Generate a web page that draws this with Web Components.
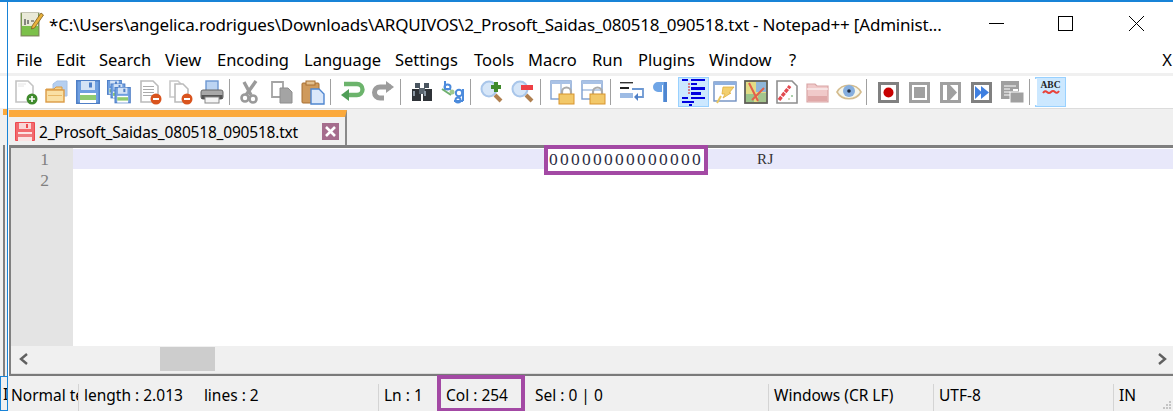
<!DOCTYPE html>
<html>
<head>
<meta charset="utf-8">
<title>Notepad++</title>
<style>
html, body { margin: 0; padding: 0; background: #fff; }
body { font-family: "Noto Sans", "Open Sans", sans-serif; }
</style>
</head>
<body>
<np-app>
	<np-ghost slot="ghost"></np-ghost>
	<np-titlebar>*C:\Users\angelica.rodrigues\Downloads\ARQUIVOS\2_Prosoft_Saidas_080518_090518.txt - Notepad++ [Administ...</np-titlebar>
	<np-menubar></np-menubar>
	<np-toolbar></np-toolbar>
	<np-tabbar>2_Prosoft_Saidas_080518_090518.txt</np-tabbar>
	<np-editor></np-editor>
	<np-scrollbar></np-scrollbar>
	<np-statusbar></np-statusbar>
</np-app>

<script>
const FONT = '"Noto Sans", "Open Sans", sans-serif';

// small builders so the icon table below stays readable
const frame = (color, inner) => `<rect x="3.5" y="3.5" width="18" height="18" fill="#fff" stroke="${color}" stroke-width="3"/>${inner}`;
const page = (x, y, w, h, stroke = '#c4c4c4') => `<path d="M${x} ${y}h${w - 5}l5 5v${h - 5}h-${w}z" fill="#fff" stroke="${stroke}" stroke-width="1.6"/>`;
const lines = (x, y, w, n) => Array.from({ length: n }, (_, i) => `<rect x="${x}" y="${y + i * 3}" width="${w}" height="1" fill="#aaa"/>`).join('');
const floppy = (x, y, s) => `<g transform="translate(${x} ${y}) scale(${s})"><rect width="24" height="24" fill="#4f7fc6"/><rect x="1.500" y="1.500" width="21" height="21" fill="#6f9fe0"/><rect x="5" y="1" width="14" height="9" fill="#d5e3f6"/><rect x="13" y="2.500" width="3" height="5" fill="#4f7fc6"/><rect x="4" y="13" width="16" height="10" fill="#fff"/><rect x="4" y="15" width="16" height="5" fill="#8fcb70"/></g>`;
const lock = (x, y) => `<path d="M${x + 3} ${y + 6}v-2a4.500 4.500 0 0 1 9 0v2" fill="none" stroke="#ababab" stroke-width="2.200"/><rect x="${x}" y="${y + 6}" width="15" height="10" fill="#f2c869" stroke="#d8952f"/>`;
const lens = (c) => `<circle cx="9" cy="9" r="7.500" fill="#d6e6f8" stroke="#a9c6ea" stroke-width="2"/><path d="M15 15l6 6" stroke="#b08050" stroke-width="4"/>${c}`;
const minusBadge = (cx, cy) => `<circle cx="${cx}" cy="${cy}" r="5.500" fill="#d9541e"/><rect x="${cx - 3}" y="${cy - 1}" width="6" height="2" fill="#fff"/>`;

const ICONS = {
	new: `${page(2, 1, 17, 21)}<path d="M4 4h8M4 6h6" stroke="#e4e4e4"/><circle cx="18" cy="19" r="5.500" fill="#3f8a2c"/><path d="M15 19h6M18 16v6" stroke="#fff" stroke-width="1.600"/>`,
	open: `<path d="M12 1h10v15H8V4z" fill="#b5cff0" stroke="#a7c2e6"/><path d="M1 9h8l2-2h6v3H1z" fill="#f6d48c" stroke="#db9a45"/><rect x="1" y="10" width="18" height="12" fill="#fae0a4" stroke="#db9a45" stroke-width="1.400"/><rect x="3" y="15" width="14" height="1" fill="#e8b866"/>`,
	save: floppy(0, 0, 1),
	saveall: `${floppy(0, 0, .62)}${floppy(3.500, 3.500, .62)}${floppy(7.500, 7, .68)}`,
	close: `${page(3, 1, 17, 21, '#bbb')}${lines(5, 6, 11, 4)}${minusBadge(18, 19)}`,
	closeall: `${page(1, 1, 13, 16, '#c8c8c8')}${page(6, 4, 13, 18, '#bbb')}${minusBadge(18, 19)}`,
	print: `<rect x="6" y="1" width="12" height="10" fill="#bcd4f2" stroke="#6d98d2" stroke-width="1.400"/><rect x="1" y="10" width="22" height="9" rx="2" fill="#a8a8a8" stroke="#666"/><rect x="1.500" y="15" width="21" height="4" fill="#555"/><rect x="5" y="17" width="14" height="6" fill="#f4f4f4" stroke="#888"/>`,
	cut: `<path d="M7 15L17 1M12 15L5 2" stroke="#9a9a9a" stroke-width="3.400" fill="none"/><circle cx="6" cy="18" r="3.500" fill="none" stroke="#9a9a9a" stroke-width="2.600"/><circle cx="14" cy="19" r="3.500" fill="none" stroke="#9a9a9a" stroke-width="2.600"/>`,
	copy: `<path d="M2 2h11v15H2z" fill="#fff" stroke="#a4a4a4" stroke-width="1.800"/><path d="M10 8h8l4 4v11H10z" fill="#a4a4a4" stroke="#8e8e8e"/>`,
	paste: `<rect x="1" y="3" width="17" height="20" rx="1" fill="#cf9a5c" stroke="#a86f31"/><rect x="5" y="1" width="9" height="4" fill="#e3c08f" stroke="#a86f31"/><path d="M10 9h8l5 5v10H10z" fill="#dbe8fa" stroke="#4f86d0" stroke-width="1.400"/>`,
	undo: `<path d="M4 4h13a5 5 0 0 1 0 11H7" fill="none" stroke="#6cb46c" stroke-width="4.400"/><path d="M9 9v12L1 15z" fill="#4f9e57"/>`,
	redo: `<path d="M20 7H9a5 5 0 0 0 0 11h4" fill="none" stroke="#9c9c9c" stroke-width="5"/><path d="M15 1v12l8-6z" fill="#9c9c9c"/>`,
	find: `<rect x="5" y="3" width="5" height="5" fill="#4a5560"/><rect x="14" y="3" width="5" height="5" fill="#4a5560"/><path d="M2 9h9v12H2zM13 9h9v12h-9z" fill="#2f3338"/><rect x="9" y="8" width="6" height="6" fill="#5b6670"/><rect x="3" y="11" width="2" height="5" fill="#8a96a2"/><rect x="14" y="11" width="2" height="5" fill="#8a96a2"/>`,
	replace: `<path d="M4 1v8h6" fill="none" stroke="#4c8bdc" stroke-width="2"/><ellipse cx="6.500" cy="7" rx="3" ry="2.500" fill="none" stroke="#4c8bdc" stroke-width="2"/><path d="M1 9l9 6" stroke="#6fb06f" stroke-width="2"/><circle cx="11" cy="12" r="2.500" fill="#9fc98e"/><circle cx="18" cy="13" r="3.200" fill="none" stroke="#4c8bdc" stroke-width="2"/><path d="M22 9v12M13 21h9" stroke="#4c8bdc" stroke-width="2"/><circle cx="17" cy="20" r="2.500" fill="none" stroke="#4c8bdc" stroke-width="2"/>`,
	zoomin: lens(`<path d="M11 8h9v-4h-4v9h4" fill="none"/><path d="M16 2v10M11 7h10" stroke="#3f8a2c" stroke-width="4"/>`),
	zoomout: lens(`<rect x="10" y="5" width="12" height="5" fill="#ee3f45"/>`),
	syncv: `<rect x="1" y="1" width="20" height="18" fill="#fff" stroke="#7d9fd0" stroke-width="1.400"/><rect x="1" y="1" width="20" height="3" fill="#a9c2e6"/><path d="M11 4v15" stroke="#7d9fd0"/>${lock(9, 8)}`,
	synch: `<rect x="1" y="1" width="20" height="18" fill="#fff" stroke="#7d9fd0" stroke-width="1.400"/><rect x="1" y="1" width="20" height="3" fill="#a9c2e6"/><path d="M1 10h20" stroke="#7d9fd0"/>${lock(9, 8)}`,
	wrap: `<rect x="0" y="2" width="13" height="1.400" fill="#333"/><rect x="0" y="7" width="9" height="2" fill="#222"/><path d="M12 9h11v8h-6" fill="none" stroke="#6d98d2" stroke-width="1.800"/><rect x="0" y="13" width="13" height="5" fill="#9dbbe4"/><path d="M18 13v8l-4-4z" fill="#4f7fc6"/>`,
	para: `<path d="M7 2h8v20h-3V5h-1v7H7a5 5 0 0 1 0-10z" fill="#6fa5e6"/><rect x="13" y="2" width="3" height="20" fill="#4f86d0"/>`,
	indent: `<g fill="#0000e0"><rect x="0" y="0" width="6" height="2"/><rect x="9" y="0" width="14" height="2"/><rect x="9" y="4" width="6" height="2"/><rect x="9" y="8" width="14" height="3"/><rect x="9" y="13" width="10" height="3"/><rect x="0" y="18" width="6" height="2"/><rect x="9" y="18" width="14" height="2"/><rect x="0" y="22" width="12" height="2"/><rect x="7" y="25" width="3" height="2"/></g><path d="M7 4v12" stroke="#e01010" stroke-width="1" stroke-dasharray="2 1"/>`,
	func: `<rect x="1" y="2" width="22" height="19" fill="#fff" stroke="#6f8fc0" stroke-width="1.400"/><rect x="1" y="2" width="22" height="3" fill="#8fb0df"/><path d="M10 7h11l-5 6h2l-8 5 2-4h-3z" fill="#f2cf6e" stroke="#e0b040" stroke-width=".8"/><path d="M4 23l4-7" stroke="#e8c660" stroke-width="2"/>`,
	map: `<rect x="1" y="1" width="22" height="22" fill="#e2dc84" stroke="#5e5e58" stroke-width="1.800"/><rect x="12" y="2" width="10" height="10" fill="#8fb6d8"/><rect x="2" y="14" width="8" height="8" fill="#9bc48a"/><rect x="14" y="13" width="8" height="9" fill="#a4c58e"/><path d="M5 3l9 18M20 8L8 20" stroke="#e2604a" stroke-width="2"/>`,
	doc: `${page(2, 1, 20, 22, '#8f8f8f')}<path d="M4 20L15 6" stroke="#e24a50" stroke-width="3.400" stroke-dasharray="4 1"/><circle cx="17" cy="16" r="1" fill="#8fc08f"/><circle cx="14" cy="19" r="1" fill="#c8c8a0"/>`,
	folder: `<path d="M1 4h8l2 2h11v16H1z" fill="#f0c9c9" stroke="#d9a6a6" stroke-width="1.200"/><path d="M1 9h21" stroke="#fff"/><rect x="2" y="16" width="19" height="5" fill="#e0a8a8"/>`,
	eye: `<path d="M0 12C5 3 19 3 24 12C19 21 5 21 0 12z" fill="#f6f6ea" stroke="#d4bc8e" stroke-width="1.600"/><circle cx="12" cy="11" r="6" fill="#86aede"/><circle cx="12" cy="11" r="1.800" fill="#1c2a40"/>`,
	rec: frame('#808080', `<circle cx="12.500" cy="12.500" r="5" fill="#c80000"/>`),
	stop: frame('#a0a0a0', `<rect x="7" y="7" width="11" height="11" fill="#a0a0a0"/>`),
	play: frame('#a0a0a0', `<path d="M9 5h3l7 7.500-7 7.500H9z" fill="#a0a0a0"/>`),
	multi: frame('#808080', `<path d="M6 6l7 6.500-7 6.500zM12 6l8 6.500-8 6.500z" fill="#3f7fe0"/>`),
	savem: `<rect x="1" y="1" width="18" height="18" fill="#a0a0a0"/><path d="M4 6h12M4 9h6M4 12h6M4 15h6" stroke="#fff"/><path d="M13 9h5v2h-5z" fill="#fff"/><rect x="10" y="12" width="14" height="11" fill="#a0a0a0" stroke="#fff"/>`
};

class NpApp extends HTMLElement {
	constructor() {
		super();
		this.attachShadow({ mode: 'open' });
	}

	connectedCallback() {
		this.shadowRoot.innerHTML = `
			<style>
				:host {
					display: grid;
					grid-template-columns: 7px 1fr;
					width: 1173px;
					height: 411px;
					box-sizing: border-box;
					border-top: 2px solid #1883d7;
					overflow: hidden;
					background: #fff;
				}
				main {
					display: flex;
					flex-direction: column;
					min-width: 0;
					border-left: 1px solid #1883d7;
				}
			</style>
			<slot name="ghost"></slot>
			<main><slot></slot></main>
		`;
	}
}

// sliver of the other window that shows left of the blue edge
class NpGhost extends HTMLElement {
	constructor() {
		super();
		this.attachShadow({ mode: 'open' });
	}

	connectedCallback() {
		this.shadowRoot.innerHTML = `
			<style>
				:host { display: flex; flex-direction: column; height: 409px; background: #fff; }
				.band { height: 3px; margin-top: 71px; background: #f0f0f0; }
				.tools { height: 32px; }
				.tabs { height: 37px; background: #f0f0f0; padding-left: 3px; }
				.tabs i { display: block; height: 6px; margin-top: 1px; background: #fba93c; }
				.edit { flex: 1; background: #f0f0f0; padding-left: 3px; border-top: 0; }
				.edit i { display: block; width: 2px; height: 100%; background: #808080; }
				.status {
					height: 35px;
					box-sizing: border-box;
					border: 1px solid #1883d7;
					border-right: 0;
					background: #f0f0f0;
					font: 16px/34px ${FONT};
					color: #000;
					padding-left: 2px;
					overflow: hidden;
				}
			</style>
			<div class="band"></div>
			<div class="tools"></div>
			<div class="tabs"><i></i></div>
			<div class="edit"><i></i></div>
			<div class="status">I</div>
		`;
	}
}

class NpTitlebar extends HTMLElement {
	constructor() {
		super();
		this.attachShadow({ mode: 'open' });
	}

	connectedCallback() {
		this.shadowRoot.innerHTML = `
			<style>
				:host {
					display: flex;
					align-items: center;
					height: 44px;
					flex: none;
					padding-left: 12px;
					font: 17px ${FONT};
					color: #000;
				}
				.logo { width: 24px; height: 26px; margin-right: 5px; flex: none; }
				.text { width: 930px; white-space: nowrap; overflow: hidden; letter-spacing: var(--title-ls, -.2px); }
				.buttons { display: flex; margin-left: auto; }
				.buttons svg { width: 71px; height: 44px; display: block; }
			</style>
			<svg class="logo" viewBox="0 0 24 26">
				<rect x="1" y="2" width="18" height="23" fill="#6aa83a" stroke="#8a8a6a"/>
				<rect x="2" y="2" width="16" height="13" fill="#e9e9d8"/>
				<path d="M2 15h16v9H2z" fill="#7cc04a"/>
				<path d="M5 8v6M8 9v4M11 10h3" stroke="#444" stroke-width="1.200"/>
				<path d="M12 15l9-13 2.500 2-9 13-3 1z" fill="#e8b23c" stroke="#7a5a20" stroke-width=".8"/>
			</svg>
			<span class="text"><slot></slot></span>
			<div class="buttons">
				<svg viewBox="0 0 71 44"><path d="M29 21.500h15" stroke="#000"/></svg>
				<svg viewBox="0 0 71 44"><rect x="27.500" y="14.500" width="14" height="14" fill="none" stroke="#000"/></svg>
				<svg viewBox="0 0 71 44"><path d="M27 14l15 15M42 14L27 29" stroke="#000" fill="none"/></svg>
			</div>
		`;
	}
}

class NpMenubar extends HTMLElement {
	constructor() {
		super();
		this.attachShadow({ mode: 'open' });
		this.items = [
			['File', 16], ['Edit', 56], ['Search', 99], ['View', 165], ['Encoding', 217],
			['Language', 304], ['Settings', 395], ['Tools', 474], ['Macro', 528], ['Run', 592],
			['Plugins', 638], ['Window', 709], ['?', 789]
		];
	}

	connectedCallback() {
		const cells = this.items.map(([name, x], i) => {
			const next = this.items[i + 1] ? this.items[i + 1][1] : x + 30;
			return `<span style="width:${next - x}px">${name}</span>`;
		}).join('');

		this.shadowRoot.innerHTML = `
			<style>
				:host {
					display: flex;
					flex: none;
					align-items: center;
					height: 27px;
					padding: 0 1px 0 8px;
					font: 16.500px ${FONT};
					color: #000;
					white-space: nowrap;
				}
				.x { margin-left: auto; }
			</style>
			${cells}
			<span class="x">X</span>
		`;
	}
}

class NpTool extends HTMLElement {
	constructor() {
		super();
		this.attachShadow({ mode: 'open' });
	}

	connectedCallback() {
		const name = this.getAttribute('icon');
		const on = this.hasAttribute('active');
		const h = name === 'indent' ? 27 : 24;

		this.shadowRoot.innerHTML = `
			<style>
				:host {
					display: flex;
					align-items: center;
					justify-content: center;
					box-sizing: border-box;
					width: 31px;
					height: 30px;
					flex: none;
					${on ? 'background: #cce8ff; border: 1px solid #99d1ff;' : ''}
				}
				svg { width: 24px; height: ${h}px; display: block; overflow: visible; }
				::slotted(*) { display: block; }
			</style>
			${name ? `<svg viewBox="0 0 24 ${h}">${ICONS[name]}</svg>` : '<slot></slot>'}
		`;
	}
}

class NpToolbar extends HTMLElement {
	constructor() {
		super();
		this.attachShadow({ mode: 'open' });
		this.groups = [
			['new', 'open', 'save', 'saveall', 'close', 'closeall', 'print'],
			['cut', 'copy', 'paste'],
			['undo', 'redo'],
			['find', 'replace'],
			['zoomin', 'zoomout'],
			['syncv', 'synch'],
			['wrap', 'para', 'indent:active', 'func', 'map', 'doc', 'folder', 'eye'],
			['rec', 'stop', 'play', 'multi', 'savem']
		];
	}

	connectedCallback() {
		const groups = this.groups.map(group => group.map(entry => {
			const [name, flag] = entry.split(':');
			return `<np-tool icon="${name}" ${flag || ''}></np-tool>`;
		}).join('')).join('<span class="sep"></span>');

		this.shadowRoot.innerHTML = `
			<style>
				:host {
					display: flex;
					flex: none;
					align-items: center;
					box-sizing: border-box;
					height: 36px;
					padding-left: 2px;
					background: #fff;
					border-top: 3px solid #f0f0f0;
					border-bottom: 1px solid #dcdcdc;
				}
				.sep {
					width: 8px;
					height: 26px;
					flex: none;
					box-sizing: border-box;
					border-left: 1px solid #a0a0a0;
					margin-left: 0;
					background: #fff;
					position: relative;
					left: 2px;
					margin-right: 0;
				}
				.abc {
					font: bold 9.500px/9px "Liberation Serif", serif;
					color: #222;
					text-align: center;
					width: 24px;
					margin-top: -9px;
				}
				.abc svg { display: block; width: 24px; height: 5px; }
			</style>
			${groups}<span class="sep"></span>
			<np-tool active style="width:31px"><div class="abc">ABC<svg viewBox="0 0 24 5"><path d="M4 3q2-3 4-1t4 0 4 0 4-1" fill="none" stroke="#e8423a" stroke-width="2"/></svg></div></np-tool>
		`;
	}
}

class NpTabbar extends HTMLElement {
	constructor() {
		super();
		this.attachShadow({ mode: 'open' });
	}

	connectedCallback() {
		this.shadowRoot.innerHTML = `
			<style>
				:host {
					display: block;
					flex: none;
					height: 36px;
					padding-left: 1px;
					background: #f0f0f0;
				}
				.tab {
					display: flex;
					align-items: center;
					box-sizing: border-box;
					width: 338px;
					height: 36px;
					border-top: 7px solid #fba93c;
					border-right: 2px solid #8a8a8a;
					padding: 0 0 0 6px;
					margin-top: 1px;
					font: 15.500px ${FONT};
					color: #000;
				}
				.disk { width: 20px; height: 19px; margin: 0 4px 0 0; flex: none; }
				.name { width: 283px; white-space: nowrap; letter-spacing: -.2px; }
				.close { width: 17px; height: 17px; flex: none; }
			</style>
			<div class="tab">
				<svg class="disk" viewBox="0 0 20 19">
					<rect width="20" height="19" rx="1" fill="#ee4a50"/>
					<rect x="1" y="1" width="18" height="17" fill="#f26a6e"/>
					<rect x="4" y="1" width="12" height="6" fill="#f9d5d6"/>
					<rect x="11" y="2" width="2" height="4" fill="#ee4a50"/>
					<rect x="3" y="10" width="14" height="9" fill="#fbe3e3"/>
					<rect x="3" y="12" width="14" height="3" fill="#ee7d80"/>
				</svg>
				<span class="name"><slot></slot></span>
				<svg class="close" viewBox="0 0 17 17">
					<rect width="17" height="17" fill="#a56d8d"/>
					<path d="M4 4l9 9M13 4l-9 9" stroke="#fff" stroke-width="2.600"/>
				</svg>
			</div>
		`;
	}
}

class NpEditor extends HTMLElement {
	constructor() {
		super();
		this.attachShadow({ mode: 'open' });
	}

	connectedCallback() {
		this.shadowRoot.innerHTML = `
			<style>
				:host {
					display: grid;
					grid-template-columns: 62px 1fr;
					flex: 1;
					min-height: 0;
					margin-left: 1px;
					border-top: 3px solid #808080;
					border-left: 2px solid #808080;
					border-top-color: #7f7f7f;
					font: 17.500px/20px "Liberation Serif", serif;
					color: #333;
				}
				.gutter {
					background: #e4e4e4;
					color: #808080;
					text-align: right;
					padding: 1px 24px 0 0;
					line-height: 21px;
				}
				.code { padding-top: 1px; background: #fff; }
				.line { display: flex; height: 20px; padding-left: 475px; background: #e8e8fa; white-space: nowrap; }
				.hit {
					position: relative;
					z-index: 1;
					display: block;
					width: 156px;
					height: 22px;
					box-sizing: border-box;
					padding-left: 1px;
					background: #fff;
					outline: 4px solid #a349a4;
					letter-spacing: 2.250px;
					color: #2c2c44;
				}
				.rj { margin-left: 53px; font-size: 15px; letter-spacing: .4px; }
			</style>
			<div class="gutter">1<br>2</div>
			<div class="code">
				<div class="line"><span class="hit">00000000000000</span><span class="rj">RJ</span></div>
			</div>
		`;
	}
}

class NpScrollbar extends HTMLElement {
	constructor() {
		super();
		this.attachShadow({ mode: 'open' });
	}

	connectedCallback() {
		this.shadowRoot.innerHTML = `
			<style>
				:host {
					display: flex;
					flex: none;
					box-sizing: border-box;
					align-items: flex-start;
					height: 30px;
					margin-left: 1px;
					background: #f0f0f0;
					border-left: 2px solid #808080;
					border-bottom: 2px solid #7a7a7a;
					box-shadow: inset 0 -1px 0 #dcdcdc;
				}
				svg { width: 14px; height: 14px; margin-top: 6px; flex: none; }
				.left { margin-left: 6px; }
				.thumb { width: 55px; height: 24px; margin: 1px 0 0 129px; background: #cdcdcd; }
				.right { margin-left: auto; margin-right: 4px; }
			</style>
			<svg class="left" viewBox="0 0 14 14"><path d="M10 2L4 7l6 5" fill="none" stroke="#606060" stroke-width="2.400"/></svg>
			<div class="thumb"></div>
			<svg class="right" viewBox="0 0 14 14"><path d="M4 2l6 5-6 5" fill="none" stroke="#606060" stroke-width="2.400"/></svg>
		`;
	}
}

class NpStatusCell extends HTMLElement {
	constructor() {
		super();
		this.attachShadow({ mode: 'open' });
	}

	connectedCallback() {
		const marked = this.hasAttribute('marked');

		this.shadowRoot.innerHTML = `
			<style>
				:host {
					display: block;
					position: relative;
					box-sizing: border-box;
					flex: none;
					height: 27px;
					margin-top: 8px;
					padding-left: var(--pad, 5px);
					border-left: 1px solid ${marked ? 'transparent' : '#d4d4d4'};
					line-height: 22px;
					white-space: nowrap;
					overflow: ${marked ? 'visible' : 'hidden'};
				}
				.box {
					position: absolute;
					left: -1px;
					top: -9px;
					right: 0;
					height: 37px;
					box-sizing: border-box;
					border: 4px solid #a349a4;
				}
			</style>
			<slot></slot>
			${marked ? '<div class="box"></div>' : ''}
		`;
	}
}

class NpStatusbar extends HTMLElement {
	constructor() {
		super();
		this.attachShadow({ mode: 'open' });
	}

	connectedCallback() {
		this.shadowRoot.innerHTML = `
			<style>
				:host {
					display: flex;
					flex: none;
					position: relative;
					height: 35px;
					font: 15.500px ${FONT};
					color: #000;
					background: #f0f0f0;
				}
				.lines { margin-left: 21px; }
				.grip { position: absolute; right: 1px; bottom: 1px; width: 10px; height: 10px; }
			</style>
			<np-status-cell style="width:70px;--pad:3px;border-left:0">Normal text file</np-status-cell>
			<np-status-cell style="width:300px;--pad:5px">length : 2.013<span class="lines">lines : 2</span></np-status-cell>
			<np-status-cell style="width:59px">Ln : 1</np-status-cell>
			<np-status-cell marked style="width:88px;--pad:8px">Col : 254</np-status-cell>
			<np-status-cell style="width:243px;--pad:10px;border-left:0">Sel : 0 | 0</np-status-cell>
			<np-status-cell style="width:165px">Windows (CR LF)</np-status-cell>
			<np-status-cell style="width:180px">UTF-8</np-status-cell>
			<np-status-cell style="width:60px">IN</np-status-cell>
			<svg class="grip" viewBox="0 0 10 10"><path d="M7 1h2v2H7zM4 4h2v2H4zM7 4h2v2H7zM1 7h2v2H1zM4 7h2v2H4zM7 7h2v2H7z" fill="#c4c4c4"/></svg>
		`;
	}
}

customElements.define('np-app', NpApp);
customElements.define('np-ghost', NpGhost);
customElements.define('np-titlebar', NpTitlebar);
customElements.define('np-menubar', NpMenubar);
customElements.define('np-tool', NpTool);
customElements.define('np-toolbar', NpToolbar);
customElements.define('np-tabbar', NpTabbar);
customElements.define('np-editor', NpEditor);
customElements.define('np-scrollbar', NpScrollbar);
customElements.define('np-status-cell', NpStatusCell);
customElements.define('np-statusbar', NpStatusbar);
</script>
</body>
</html>
